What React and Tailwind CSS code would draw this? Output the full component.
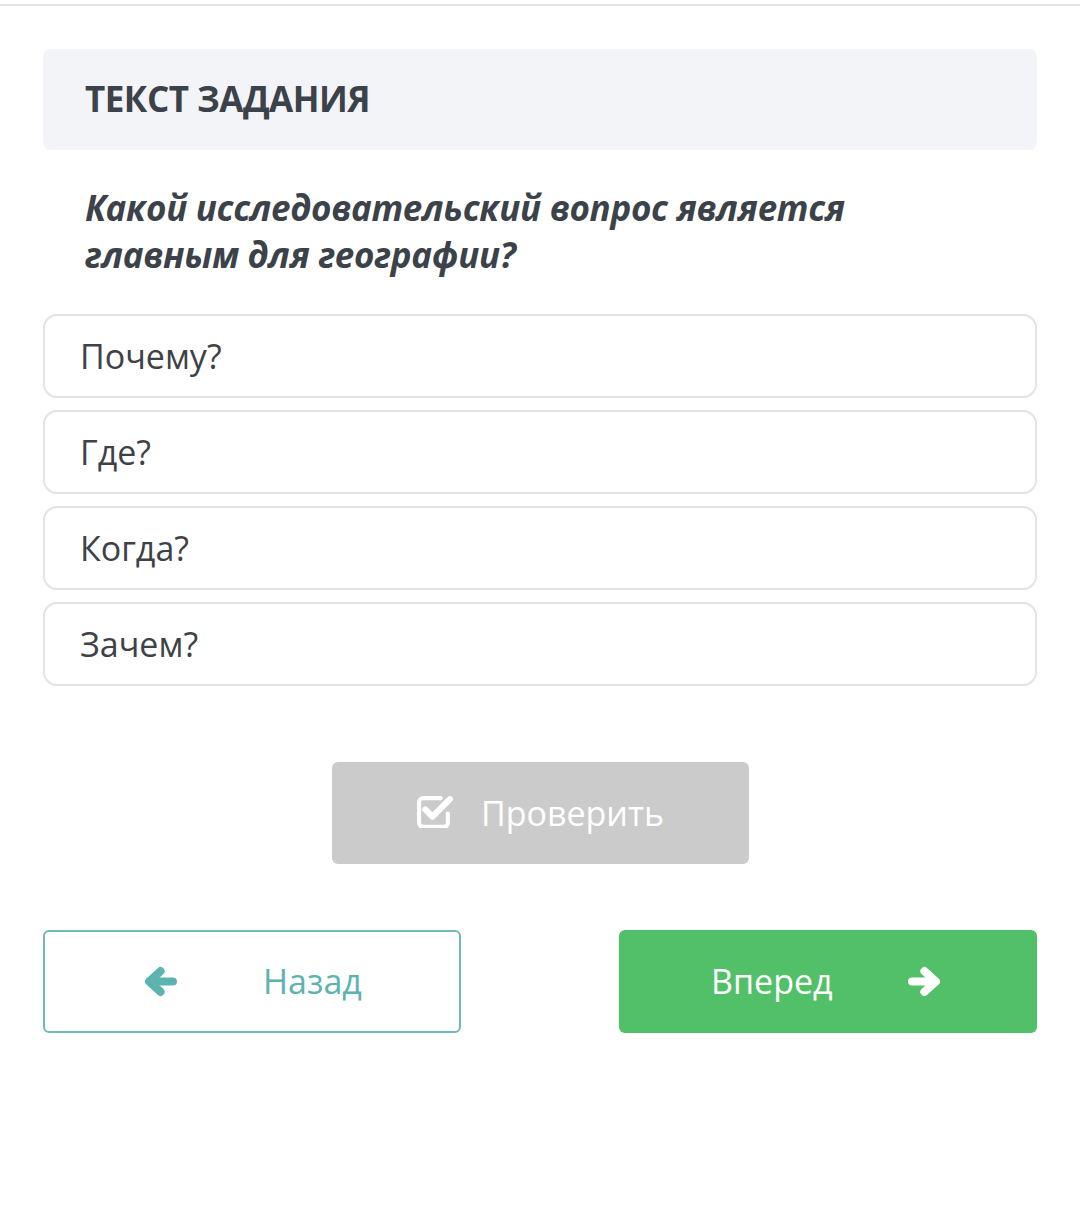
import React, { useState } from "react";

const options = ["Почему?", "Где?", "Когда?", "Зачем?"];

const CheckSquare = ({ className }) => (
  <svg viewBox="0 0 36 32" className={className} fill="none">
    <path d="M24 3H7a4 4 0 0 0-4 4v20a4 4 0 0 0 4 4h20a4 4 0 0 0 4-4v-9" stroke="currentColor" strokeWidth="4" strokeLinecap="round" />
    <path d="M9 14l7 7L33 4" stroke="currentColor" strokeWidth="6" strokeLinecap="round" strokeLinejoin="round" />
  </svg>
);

// thick font-awesome style arrow, pointing right; flip for left
const Arrow = ({ className, left }) => (
  <svg viewBox="0 0 34 30" className={className} fill="none" style={left ? { transform: "scaleX(-1)" } : undefined}>
    <path d="M5 15h22" stroke="currentColor" strokeWidth="8" strokeLinecap="round" />
    <path d="M17 5l11 10-11 10" stroke="currentColor" strokeWidth="8" strokeLinecap="round" strokeLinejoin="round" />
  </svg>
);

const App = () => {
  const [selected, setSelected] = useState(null);

  return (
    <div className="min-h-[1216px] bg-white font-['Open_Sans',sans-serif]">
      <div className="h-[4px]" />
      <div className="border-t-2 border-[#e4e4e4]" />

      <div className="px-[43px] pt-[43px]">
        <div className="h-[101px] rounded-lg bg-[#f3f4f7] px-[42px] flex items-center">
          <h2 className="text-[35px] font-bold tracking-[-0.5px] text-[#3c4249] uppercase">Текст задания</h2>
        </div>

        <p className="mt-[34px] px-[42px] text-[35px] leading-[47px] font-bold italic text-[#3c4249] tracking-[-0.3px]">
          Какой исследовательский вопрос является
          <br />
          главным для географии?
        </p>

        <div className="mt-[36px] flex flex-col gap-[12px]">
          {options.map((o, i) => (
            <button
              key={o}
              onClick={() => setSelected(i)}
              className={`h-[84px] rounded-[14px] border-2 text-left px-[35px] text-[34px] text-[#3e4246] ${selected === i ? "border-[#5bb5b0]" : "border-[#e3e3e3]"}`}
            >
              {o}
            </button>
          ))}
        </div>

        <div className="mt-[76px] flex justify-center">
          <button className="w-[417px] h-[102px] rounded-md bg-[#cbcbcb] text-white flex items-center justify-center gap-[28px] text-[34px]">
            <CheckSquare className="w-[37px] h-[33px] -mt-[3px]" />
            <span>Проверить</span>
          </button>
        </div>

        <div className="mt-[66px] flex justify-between">
          <button className="w-[418px] h-[103px] rounded-md border-2 border-[#6fb9b6] text-[#5cb3b0] flex items-center pl-[98px] text-[34px]">
            <Arrow left className="w-[35px] h-[31px]" />
            <span className="ml-[85px]">Назад</span>
          </button>
          <button className="w-[418px] h-[103px] rounded-md bg-[#52c068] text-white flex items-center pl-[92px] text-[34px]">
            <span>Вперед</span>
            <Arrow className="ml-[74px] w-[35px] h-[31px]" />
          </button>
        </div>
      </div>
    </div>
  );
};

export default App;
